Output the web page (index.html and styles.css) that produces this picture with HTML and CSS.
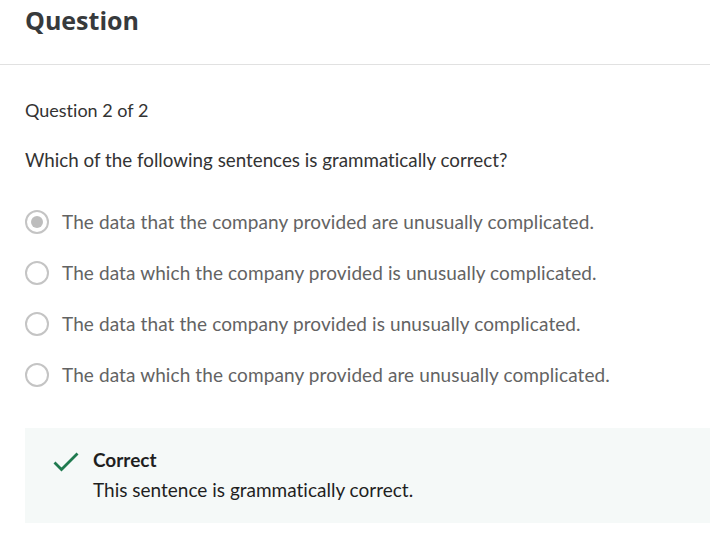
FILE: index.html
```html
<!DOCTYPE html>
<html lang="en">
<head>
<meta charset="utf-8">
<title>Question</title>
<link rel="stylesheet" href="styles.css">
</head>
<body>
<header class="header">
  <h1 class="title">Question</h1>
</header>
<main class="content">
  <p class="counter">Question 2 of 2</p>
  <p class="prompt">Which of the following sentences is grammatically correct?</p>
  <ul class="options">
    <li class="option"><span class="radio radio-checked"></span><span class="option-text">The data that the company provided are unusually complicated.</span></li>
    <li class="option"><span class="radio"></span><span class="option-text">The data which the company provided is unusually complicated.</span></li>
    <li class="option"><span class="radio"></span><span class="option-text">The data that the company provided is unusually complicated.</span></li>
    <li class="option"><span class="radio"></span><span class="option-text">The data which the company provided are unusually complicated.</span></li>
  </ul>
  <div class="feedback">
    <svg class="check" width="26" height="20" viewBox="0 0 26 20" aria-hidden="true">
      <path d="M1.5 10.5 L8.5 17.5 L24.5 1.5" fill="none" stroke="#1f7a4f" stroke-width="2.8"/>
    </svg>
    <div class="feedback-body">
      <div class="feedback-title">Correct</div>
      <div class="feedback-text">This sentence is grammatically correct.</div>
    </div>
  </div>
</main>
</body>
</html>
```
FILE: styles.css
```css
html, body {
  margin: 0;
  padding: 0;
  background: #ffffff;
}
body {
  font-family: "Lato", "Noto Sans", sans-serif;
  font-variant-ligatures: no-common-ligatures;
  color: #333333;
  width: 710px;
  overflow: hidden;
}
.header {
  height: 64px;
  border-bottom: 1px solid #e1e1e1;
  padding: 0 25px;
  box-sizing: content-box;
}
.title {
  margin: 0;
  font-family: "Open Sans", sans-serif;
  font-weight: 700;
  font-size: 25px;
  line-height: 40px;
  color: #373a3c;
}
.content {
  padding: 0 0 0 25px;
}
.counter {
  margin: 33px 0 0;
  font-size: 18px;
  line-height: 24px;
  color: #333333;
}
.prompt {
  margin: 26px 0 0;
  font-size: 18.8px;
  line-height: 24px;
  color: #333333;
}
.options {
  list-style: none;
  margin: 24px 0 0;
  padding: 0;
}
.option {
  display: flex;
  align-items: center;
  height: 51px;
}
.radio {
  width: 20px;
  height: 20px;
  border: 2px solid #c4c4c4;
  border-radius: 50%;
  display: flex;
  align-items: center;
  justify-content: center;
  flex: none;
  margin-right: 13px;
}
.radio-checked::after {
  content: "";
  width: 12px;
  height: 12px;
  border-radius: 50%;
  background: #bdbdbd;
}
.option-text {
  font-size: 19px;
  letter-spacing: 0.1px;
  line-height: 24px;
  color: #636363;
}
.feedback {
  margin-top: 28px;
  background: #f5f9f8;
  display: flex;
  align-items: flex-start;
  padding: 17px 0 18px 28px;
}
.check {
  margin-top: 7px;
  margin-right: 14px;
  flex: none;
}
.feedback-title {
  font-weight: 700;
  font-size: 19px;
  line-height: 30px;
  color: #1f1f1f;
}
.feedback-text {
  font-size: 19px;
  line-height: 30px;
  color: #1f1f1f;
}
```
